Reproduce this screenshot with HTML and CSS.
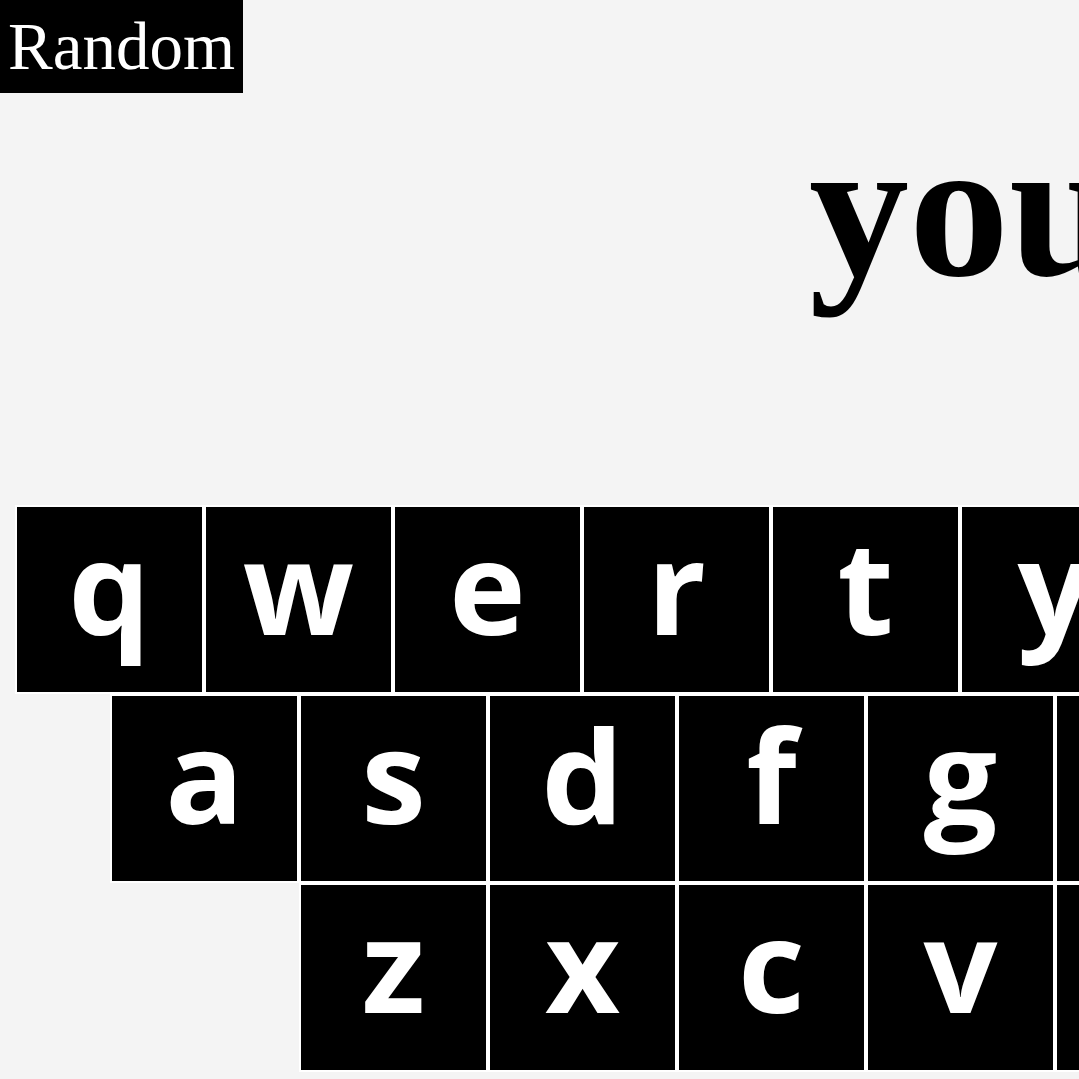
FILE: index.html
```html
<!DOCTYPE html>
<html>
<head>
<meta charset="utf-8">
<link rel="stylesheet" href="styles.css">
</head>
<body>
<div class="top">
  <div class="random" role="button">Random</div>
</div>
<div class="word">you</div>
<div class="keyboard">
  <div class="row">
    <div class="key">q</div><div class="key">w</div><div class="key">e</div><div class="key">r</div><div class="key">t</div><div class="key">y</div><div class="key">u</div><div class="key">i</div><div class="key">o</div><div class="key">p</div>
  </div>
  <div class="row row-2">
    <div class="key">a</div><div class="key">s</div><div class="key">d</div><div class="key">f</div><div class="key">g</div><div class="key">h</div><div class="key">j</div><div class="key">k</div><div class="key">l</div>
  </div>
  <div class="row row-3">
    <div class="key">z</div><div class="key">x</div><div class="key">c</div><div class="key">v</div><div class="key">b</div><div class="key">n</div><div class="key">m</div>
  </div>
</div>
</body>
</html>
```

FILE: styles.css
```css
html, body {
  margin: 0;
  padding: 0;
  background: #f4f4f4;
  overflow: hidden;
  width: 1079px;
  height: 1079px;
}
body {
  font-family: "Liberation Serif", "Times New Roman", serif;
}
.top {
  display: flex;
}
.random {
  box-sizing: border-box;
  width: 243px;
  height: 93px;
  padding: 0 8px;
  background: #000;
  color: #fff;
  font-family: "Liberation Serif", "Times New Roman", serif;
  font-size: 67px;
  line-height: 93px;
  white-space: nowrap;
  cursor: pointer;
}
.word {
  font-family: "Liberation Serif", "Times New Roman", serif;
  font-weight: 700;
  font-size: 200px;
  line-height: 230px;
  height: 230px;
  padding-left: 809px;
  white-space: nowrap;
  color: #000;
}
.keyboard {
  margin-top: 182px;
  padding-left: 15px;
}
.row {
  display: flex;
  flex-wrap: nowrap;
  height: 189px;
}
.row-2 {
  padding-left: 95px;
}
.row-3 {
  padding-left: 284px;
}
.key {
  flex: 0 0 189px;
  box-sizing: border-box;
  width: 189px;
  height: 189px;
  border: 2px solid #fff;
  background: #000;
  color: #fff;
  font-family: "Open Sans", "Noto Sans", sans-serif;
  font-weight: 700;
  font-size: 130px;
  line-height: 130px;
  display: flex;
  align-items: center;
  justify-content: center;
  padding-bottom: 30px;
}
```
